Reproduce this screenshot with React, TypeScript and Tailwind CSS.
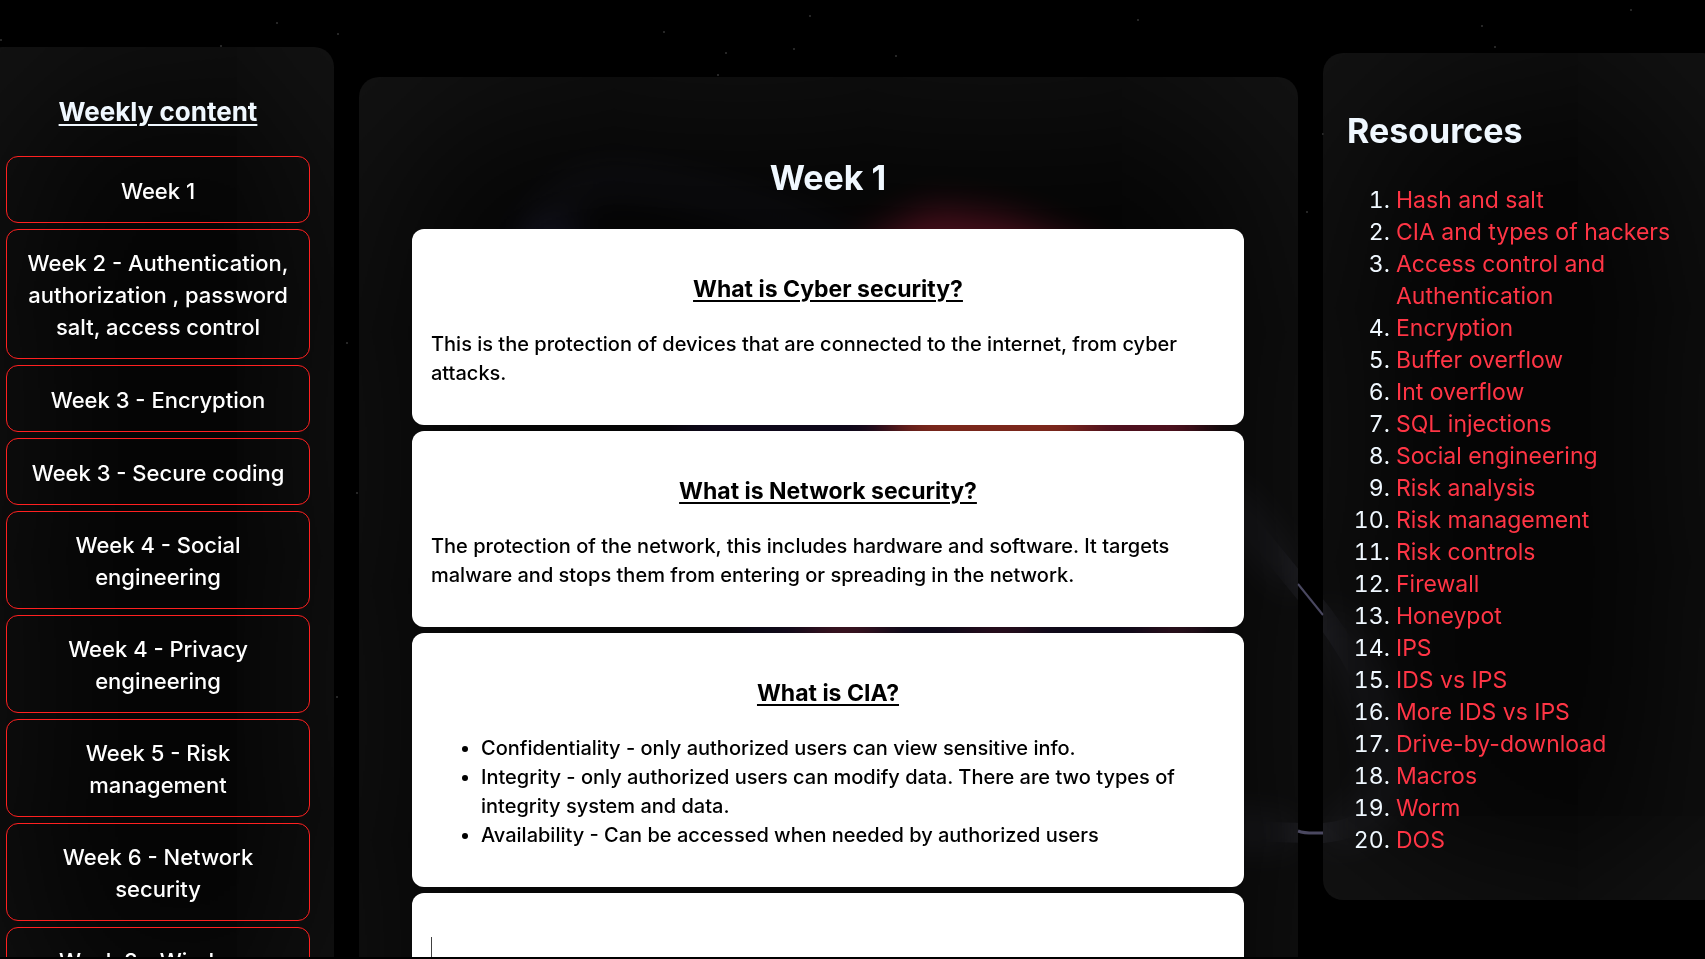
import React from "react";

const weeks = [
  "Week 1",
  "Week 2 - Authentication, authorization , password salt, access control",
  "Week 3 - Encryption",
  "Week 3 - Secure coding",
  "Week 4 - Social engineering",
  "Week 4 - Privacy engineering",
  "Week 5 - Risk management",
  "Week 6 - Network security",
  "Week 8 - Windows security",
];

const resources = [
  "Hash and salt",
  "CIA and types of hackers",
  "Access control and Authentication",
  "Encryption",
  "Buffer overflow",
  "Int overflow",
  "SQL injections",
  "Social engineering",
  "Risk analysis",
  "Risk management",
  "Risk controls",
  "Firewall",
  "Honeypot",
  "IPS",
  "IDS vs IPS",
  "More IDS vs IPS",
  "Drive-by-download",
  "Macros",
  "Worm",
  "DOS",
];

const stars = [
  [276, 23], [337, 34], [0, 40], [220, 46], [809, 16], [663, 32], [793, 49], [725, 53], [895, 56], [717, 75],
  [1137, 20], [1481, 26], [1494, 47], [1630, 10], [1306, 212], [1322, 134], [346, 343], [356, 493], [336, 697],
];

const panel =
  "bg-white/2 backdrop-blur-[20px] shadow-[inset_0_0_200px_rgba(255,255,255,0.09)]";

function Backdrop() {
  return (
    <svg
      aria-hidden="true"
      className="absolute inset-0 h-full w-full"
      viewBox="0 0 1705 959"
      preserveAspectRatio="xMidYMid slice"
    >
      <path d="M545 250 C535 190 590 170 660 185 S790 215 850 250" fill="none" stroke="#13131c" strokeWidth="12" />
      <rect x="525" y="232" width="50" height="30" fill="#14142a" />
      <rect x="680" y="380" width="210" height="110" fill="#0a0416" />
      <path d="M890 460 L860 250 L930 212 L1010 222 L1100 258 L1210 420 L1190 470 Z" fill="#4c0c1a" />
      <path d="M895 460 L910 340 L1010 270 L1070 290 L1090 470 Z" fill="#7c2418" />
      <rect x="740" y="590" width="470" height="70" fill="#0a0516" />
      <rect x="810" y="600" width="70" height="60" fill="#3c101e" />
      <rect x="970" y="600" width="60" height="60" fill="#280a1a" />
      <rect x="1150" y="600" width="50" height="60" fill="#2c0c18" />
      <path
        d="M1220 490 L1323 616 C1400 720 1420 826 1323 834 C1290 834 1240 832 1210 830"
        fill="none"
        stroke="#131318"
        strokeWidth="20"
      />
      <rect x="1298" y="480" width="25" height="400" />
      <g fill="none" stroke="#4a4860" strokeWidth="2">
        <path d="M1298 585 L1323 616" />
        <path d="M1298 832 C1306 835 1312 834 1323 834" strokeWidth="3" />
      </g>
      {stars.map(([x, y]) => (
        <rect key={`${x}-${y}`} x={x} y={y} width="2" height="2" fill="#262626" />
      ))}
    </svg>
  );
}

function Card({ title, children }: { title: string; children: React.ReactNode }) {
  return (
    <section className="rounded-xl bg-white px-[19px] pt-11 pb-[37px] text-xl leading-[29px] font-medium text-black">
      <h2 className="mb-[25px] text-center text-[23px] leading-8 font-bold underline decoration-2 underline-offset-3">
        {title}
      </h2>
      {children}
    </section>
  );
}

export default function App() {
  return (
    <div className="relative h-screen overflow-hidden border-b-2 border-black bg-black font-['Inter',sans-serif] text-white">
      <Backdrop />
      <div className="relative -mx-[18px] flex items-start gap-[25px]">
        <nav className={`mt-[47px] w-[352px] shrink-0 rounded-[20px] px-6 pt-[49px] pb-12 ${panel}`}>
          <h2 className="mb-7 text-center text-[26px] leading-8 font-bold text-[#f0f8ff] underline decoration-2 underline-offset-3">
            Weekly content
          </h2>
          <div className="flex flex-col gap-1.5">
            {weeks.map((w) => (
              <button
                key={w}
                type="button"
                className="min-h-[67px] rounded-xl border border-[#ff2020] px-3.5 pt-[17px] pb-[15px] text-[22px] leading-8 font-medium"
              >
                {w}
              </button>
            ))}
          </div>
        </nav>

        <main className={`mt-[77px] min-w-0 flex-1 rounded-[20px] pt-[81px] pr-[54px] pb-12 pl-[53px] ${panel}`}>
          <h1 className="mb-[31px] text-center text-[34px] leading-10 font-bold text-[#f0f8ff]">Week 1</h1>
          <div className="flex flex-col gap-1.5">
            <Card title="What is Cyber security?">
              <p>This is the protection of devices that are connected to the internet, from cyber attacks.</p>
            </Card>
            <Card title="What is Network security?">
              <p>
                The protection of the network, this includes hardware and software. It targets malware and stops them
                from entering or spreading in the network.
              </p>
            </Card>
            <Card title="What is CIA?">
              <ul className="list-disc pl-[50px]">
                <li>Confidentiality - only authorized users can view sensitive info.</li>
                <li>
                  Integrity - only authorized users can modify data. There are two types of integrity system and data.
                </li>
                <li>Availability - Can be accessed when needed by authorized users</li>
              </ul>
            </Card>
            <section className="rounded-xl bg-white px-[19px] pt-11 pb-[37px]">
              <div className="h-96 border-l border-neutral-700" />
            </section>
          </div>
        </main>

        <aside className={`mt-[53px] w-[400px] shrink-0 rounded-[20px] pt-[58px] pr-[30px] pb-11 pl-6 ${panel}`}>
          <h2 className="mb-[33px] text-[34px] leading-10 font-bold text-[#f0f8ff]">Resources</h2>
          <ol className="list-decimal pl-[49px] text-[23px] leading-8 text-[#f0f8ff]">
            {resources.map((r) => (
              <li key={r}>
                <a href="#" className="text-[#ff3545]">
                  {r}
                </a>
              </li>
            ))}
          </ol>
        </aside>
      </div>
    </div>
  );
}
